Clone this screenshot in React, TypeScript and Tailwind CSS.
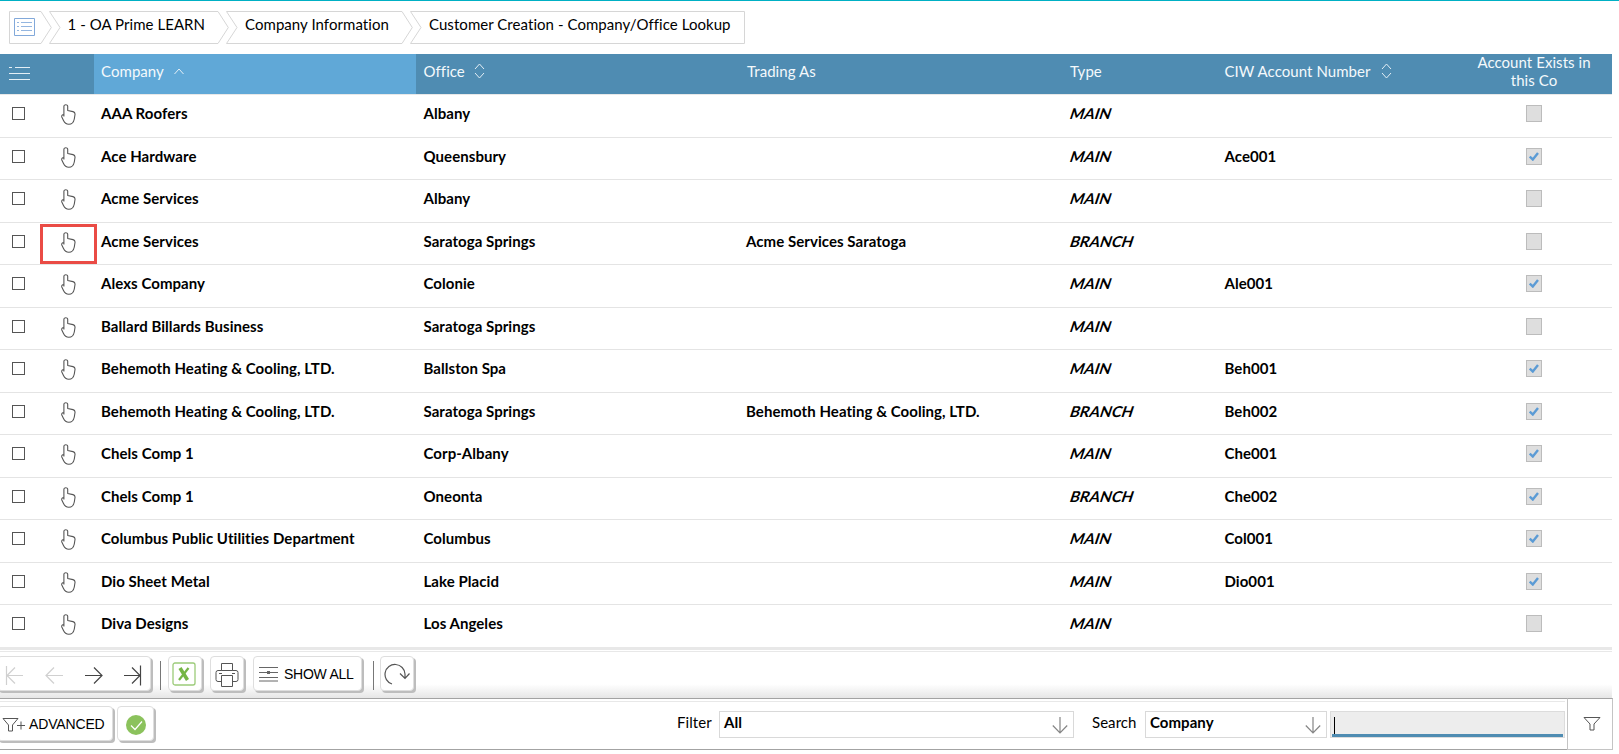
import React from "react";

type Row = [string, string, string, string, string, boolean];

const rows: Row[] = [
  ["AAA Roofers", "Albany", "", "MAIN", "", false],
  ["Ace Hardware", "Queensbury", "", "MAIN", "Ace001", true],
  ["Acme Services", "Albany", "", "MAIN", "", false],
  ["Acme Services", "Saratoga Springs", "Acme Services Saratoga", "BRANCH", "", false],
  ["Alexs Company", "Colonie", "", "MAIN", "Ale001", true],
  ["Ballard Billards Business", "Saratoga Springs", "", "MAIN", "", false],
  ["Behemoth Heating & Cooling, LTD.", "Ballston Spa", "", "MAIN", "Beh001", true],
  ["Behemoth Heating & Cooling, LTD.", "Saratoga Springs", "Behemoth Heating & Cooling, LTD.", "BRANCH", "Beh002", true],
  ["Chels Comp 1", "Corp-Albany", "", "MAIN", "Che001", true],
  ["Chels Comp 1", "Oneonta", "", "BRANCH", "Che002", true],
  ["Columbus Public Utilities Department", "Columbus", "", "MAIN", "Col001", true],
  ["Dio Sheet Metal", "Lake Placid", "", "MAIN", "Dio001", true],
  ["Diva Designs", "Los Angeles", "", "MAIN", "", false],
];

const columns = "grid grid-cols-[50px_44px_322px_324px_322px_155px_239px_156px]";

function Crumb({ width, first, last, children }: { width: number; first?: boolean; last?: boolean; children: React.ReactNode }) {
  const w = width;
  const right = last ? `H${w - 0.5} V32.5` : `H${w - 11} L${w - 0.7} 16.5 L${w - 11} 32.5`;
  const left = first ? "" : "L11 16.5";
  return (
    <div className="relative -mr-[3px] h-[33px] shrink-0" style={{ width: w }}>
      <svg className="absolute inset-0" width={w} height="33" fill="none" stroke="#d6d6d6">
        <path d={`M0.5 0.5 ${right} H0.5 ${left} Z`} />
      </svg>
      <div className="relative">{children}</div>
    </div>
  );
}

function SortIcon() {
  return (
    <svg width="11" height="16" viewBox="0 0 11 16" fill="none" stroke="#e4eff6" strokeWidth="1">
      <path d="M1 6 5.500 1 10 6M1 10l4.500 5L10 10" />
    </svg>
  );
}

function Hand() {
  return (
    <svg width="15" height="21" viewBox="0 0 15 21" fill="none" stroke="#555" strokeWidth="1.1" strokeLinejoin="round">
      <path d="M2.900 12.500V2.200C2.900 .3 6.700 .3 6.700 2.200V6.500L12 7.600C13.900 8.100 14.200 9 14 10.500L13.300 15C12.700 18 11 20.300 7.800 20.300C5 20.300 3.600 19 2.500 16.500L.8 13C.4 11.500 1.500 10.500 2.900 10.700" />
    </svg>
  );
}

function DownArrow() {
  return (
    <svg width="16" height="17" viewBox="0 0 16 17" fill="none" stroke="#858585" strokeWidth="1.200">
      <path d="M8 0v16M.8 8.500 8 16l7.200-7.500" />
    </svg>
  );
}

const button =
  "flex h-[35px] shrink-0 items-center rounded-[4px] border border-[#dedede] bg-white shadow-[2px_2px_0_0_#bdbdbd]";

export default function App() {
  return (
    <div className="h-[754px] w-[1619px] overflow-hidden bg-white font-['Lato',sans-serif] text-[15px] leading-[18px] tracking-[0.055px] text-black [font-variant-ligatures:none]">
      <div className="h-px bg-[#00b0c4]" />
      <nav className="flex h-[53px] pt-[10px] pl-[9px]">
        <Crumb width={43} first>
          <svg className="mt-[7px] ml-[5px]" width="21" height="18" fill="none" stroke="#82a9da">
            <path d="M.5.5h20v17H.5z" />
            <path stroke="#94b6e0" d="M3 4.500h2M7 4.500h11M3 8.500h2M7 8.500h11M3 12.500h2M7 12.500h11" />
          </svg>
        </Crumb>
        <Crumb width={180}><div className="pt-[4px] pl-[18.5px]">1 - OA Prime LEARN</div></Crumb>
        <Crumb width={187}><div className="pt-[4px] pl-[19px]">Company Information</div></Crumb>
        <Crumb width={335} last><div className="pt-[4px] pl-[19px]">Customer Creation - Company/Office Lookup</div></Crumb>
      </nav>

      <div className={`${columns} h-[40px] w-[1612px] bg-[#4f8cb2] leading-[34px] text-[#f4f9fc]`}>
        <svg className="mt-[12px] ml-[9px]" width="21" height="15" fill="none" stroke="#e4eff6">
          <path d="M0 1.500h3M6 1.500h15M0 7.500h21M0 13.500h21" />
        </svg>
        <span />
        <div className="flex gap-[10px] bg-[#60a8d7] pl-[7px]">
          Company
          <svg className="mt-[14px]" width="10" height="7" fill="none" stroke="#e4eff6"><path d="M.5 6 5 1l4.500 5" /></svg>
        </div>
        <div className="flex gap-[9.5px] pl-[7.5px]">Office <span className="pt-[9px]"><SortIcon /></span></div>
        <div className="pl-[7px]">Trading As</div>
        <div className="pl-[8px]">Type</div>
        <div className="flex gap-[10px] pl-[7.5px]">CIW Account Number <span className="pt-[9px]"><SortIcon /></span></div>
        <div className="-mt-px px-[18px] text-center leading-[18px]">Account Exists in this Co</div>
      </div>

      <div className="h-[553px] w-[1612px] overflow-hidden border-t border-[#e8e8e8]">
        {rows.map(([company, office, trading, type, account, exists], i) => (
          <div key={i} className={`${columns} h-[42.5px] border-b border-[#e4e4e4] pt-[9px] font-bold`}>
            <span className="mt-[3px] ml-[12px] h-[13px] w-[13px] border border-[#555]" />
            <span className="relative pl-[11px]">
              <Hand />
              {i === 3 && <span className="absolute -top-[8px] -left-[10px] h-[40px] w-[57px] border-[3px] border-[#ea4b45]" />}
            </span>
            <span className="pl-[7px]">{company}</span>
            <span className="pl-[7.5px]">{office}</span>
            <span className="pl-[6px]">{trading}</span>
            <span className="pl-[7px]"><span className="inline-block origin-[0_14px] -skew-x-[18deg]">{type}</span></span>
            <span className="pl-[7.5px]">{account}</span>
            <span className="mt-px ml-[70px] flex h-[17px] w-[16px] items-center justify-center border border-[#bcbcbc] bg-[#dedede]">
              {exists && <svg width="10" height="9" fill="none" stroke="#5b9bd5" strokeWidth="2.400"><path d="m.8 4.500 3 3L9 1" /></svg>}
            </span>
          </div>
        ))}
      </div>

      <div className="h-[3px] w-[1612px] bg-[#e8e8e8]" />
      <div className="h-[48px] w-[1612px] pt-px">
        <div className="flex h-[47px] border-t border-[#e8e8e8] bg-linear-to-b from-white from-70% to-[#e6e6e6] pt-[4px] font-['Liberation_Sans',sans-serif] text-[14px] tracking-[-0.25px]">
          <div className={`${button} -ml-[3px] w-[154px]`}>
            <svg className="shrink-0" width="150" height="34" fill="none" stroke="#d0d0d0" strokeWidth="1.200">
              <path d="M8.500 9v19M25 18.500H9M17 10.500l-8 8 8 8M65 18.500H48M56 10.500l-8 8 8 8" />
              <path stroke="#444" d="M87 18.500h17M96 10.500l8 8-8 8M126 18.500h16M134 10.500l8 8-8 8M142.500 8.500v20" />
            </svg>
          </div>
          <span className="mt-[5px] ml-[9px] h-[29px] w-px bg-[#777]" />
          <div className={`${button} ml-[7px] w-[34px] pl-[3px]`}>
            <svg width="24" height="24" fill="none"><rect x="1" y="1" width="22" height="22" rx="2" stroke="#9ccb79" strokeWidth="1.300" /><path d="M8 6 15.500 18" stroke="#76b646" strokeWidth="3.600" /><path d="M16.500 6 7 18" stroke="#76b646" strokeWidth="2.200" /></svg>
          </div>
          <div className={`${button} ml-[8px] w-[34px] pl-[4px]`}>
            <svg className="mt-[2px]" width="24" height="24" fill="white" stroke="#555"><rect x="1" y="7.500" width="22" height="11" rx="2" /><path d="M6.500.5h11v7h-11zM6.500 12.500h11v11h-11zM4 10.500h3M17 10.500h3" /></svg>
          </div>
          <div className={`${button} ml-[9px] w-[109px] gap-[6px] pl-[5px]`}>
            <svg width="19" height="16" stroke="#666"><path d="M0 1.500h19M0 6.500h19M0 11.500h19M0 15h19" /><path d="M8 6.500h3" strokeWidth="3" /></svg>
            SHOW ALL
          </div>
          <span className="mt-[5px] ml-[11px] h-[29px] w-px bg-[#777]" />
          <div className={`${button} ml-[6px] w-[34px] justify-center`}>
            <svg className="mt-px" width="26" height="22" fill="none" stroke="#555" strokeWidth="1.200"><path d="M8 21A10 10 0 1 1 21 11v4M16 10.500l5 5 4.500-5" /></svg>
          </div>
        </div>
      </div>

      <div className="flex h-[52px] w-[1613px]">
        <div className="flex w-[1567px] border-y border-[#a3a3a3]">
          <div className="mt-[2px] flex w-[1565px] border-t border-[#e8e8e8] pt-[4px]">
            <div className={`${button} -ml-[3px] w-[116px] gap-[4px] pl-[4px] font-['Liberation_Sans',sans-serif] text-[14px] tracking-[-0.15px]`}>
              <svg className="mt-[2px]" width="23" height="15" fill="none" stroke="#555"><path d="M1 1.500h15L10.500 8v6h-4V8zM15 8.500h8M19 4.500v8" /></svg>
              ADVANCED
            </div>
            <div className={`${button} ml-[4px] w-[37px] pl-[8px]`}>
              <svg className="mt-[2px]" width="20" height="20" fill="none"><circle cx="10" cy="10" r="10" fill="#8bc25c" /><path d="m5 10.500 4 4 7-8" stroke="white" strokeWidth="1.200" /></svg>
            </div>
            <label className="w-[557px] pt-[7px] pl-[523px]">Filter</label>
            <div className="mt-[5px] ml-[8px] flex h-[27px] w-[355px] justify-between border border-[#d9d9d9] pt-px pr-[5px] pl-[4px] font-bold">All<span className="pt-[4px]"><DownArrow /></span></div>
            <label className="w-[63px] pt-[7px] pl-[18px]">Search</label>
            <div className="mt-[5px] ml-[8px] flex h-[27px] w-[182px] justify-between border border-[#d9d9d9] pt-px pr-[5px] pl-[4px] font-bold">Company<span className="pt-[4px]"><DownArrow /></span></div>
            <div className="mt-[5px] ml-[3px] flex h-[27px] flex-1 flex-col justify-end border border-[#dcdcdc] bg-[#ededed] px-px">
              <span className="ml-[2px] h-[17px] w-px bg-black" />
              <span className="h-[3px] bg-[#4f8cb2]" />
            </div>
          </div>
        </div>
        <div className="flex w-[46px] items-center justify-center border border-t-[#a3a3a3] border-[#c4c4c4] pl-[3px]">
          <svg className="-mt-px" width="18" height="15" fill="none" stroke="#555"><path d="M1 1.500h16L11 8v6H7V8z" /></svg>
        </div>
      </div>
    </div>
  );
}
